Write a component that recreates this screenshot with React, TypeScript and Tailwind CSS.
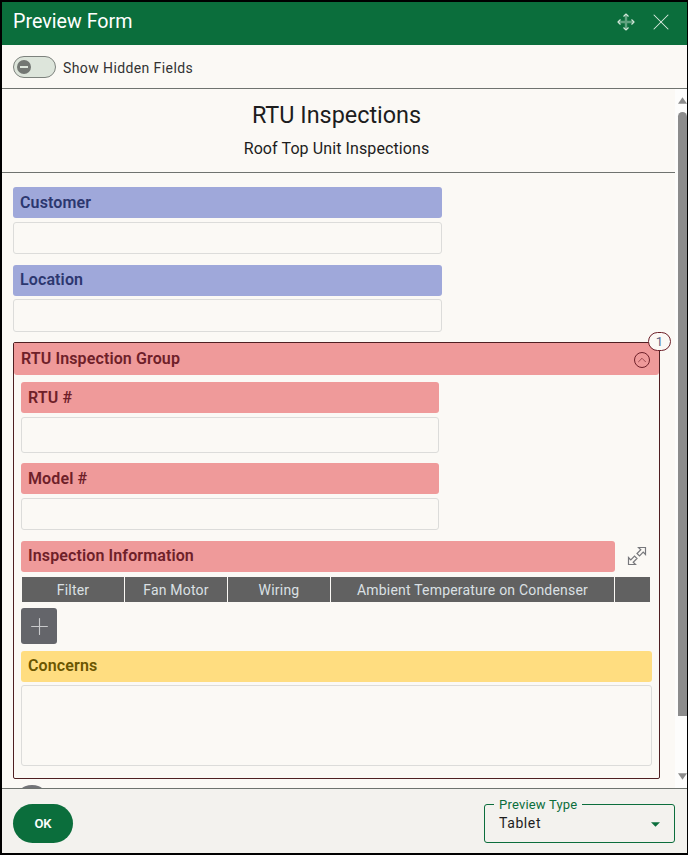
import React from "react";
import { X, Plus, ChevronUp } from "lucide-react";

const MoveIcon = () => (
    <svg width="18" height="18" viewBox="0 0 18 18" fill="none" stroke="#d3e6da" strokeWidth="1.2">
        <path d="M9 1V17M1 9H17" strokeOpacity="0.65" strokeWidth="2.4" stroke="#8fbfa3" />
        <path d="M6.5 3.5L9 1L11.5 3.5M6.5 14.5L9 17L11.5 14.5M3.5 6.5L1 9L3.5 11.5M14.5 6.5L17 9L14.5 11.5" />
    </svg>
);

const ExpandIcon = () => (
    <svg width="20" height="20" viewBox="0 0 20 20" fill="none" stroke="#77787c" strokeWidth="1.2">
        <path d="M11.5 1.5H18.5V8.5L16.2 6.2L12.5 10L10 7.5L13.8 3.8Z" />
        <path d="M8.5 18.5H1.5V11.5L3.8 13.8L7.5 10L10 12.5L6.2 16.2Z" />
    </svg>
);

const Bar = ({ label, tone, width, lift }: { label: string; tone: "blue" | "red" | "yellow"; width: string; lift?: boolean }) => {
    const tones = {
        blue: "bg-[#9fa8da] text-[#2c376f]",
        red: "bg-[#ef9a9a] text-[#6e2029]",
        yellow: "bg-[#ffdd80] text-[#6b5600]",
    };
    return (
        <div className={`flex h-[31px] items-center rounded-[3px] px-[7px] text-base font-semibold tracking-[0.12px] ${lift ? "pb-[2px]" : ""} ${tones[tone]} ${width}`}>
            {label}
        </div>
    );
};

const Input = ({ className }: { className: string }) => (
    <div className={`rounded-[3px] border border-[#dcdcda] bg-[#fbf9f5] ${className}`} />
);

export default function App() {
    return (
        <div className="flex h-[855px] w-[688px] flex-col overflow-hidden border-[2px] border-r-[1px] border-black bg-[#fbf9f5] font-['Roboto',sans-serif]">
            {/* Title bar */}
            <header className="flex h-[43px] shrink-0 items-center justify-between bg-[#0b6e3c] pb-[4px] pl-[11px] pr-[19px] text-white">
                <h1 className="text-[19.7px] leading-none">Preview Form</h1>
                <div className="flex items-center gap-[19px]">
                    <MoveIcon />
                    <X size={28} strokeWidth={0.9} color="#dcebe2" className="-mx-[7px]" />
                </div>
            </header>

            {/* Toolbar */}
            <div className="flex h-[44px] shrink-0 items-center gap-[7px] border-b border-[#6f736f] pl-[11px]">
                <div className="flex h-[22px] w-[43px] items-center rounded-full border border-[#7d827d] bg-[#dde5db] pl-[3px]">
                    <div className="flex h-[14px] w-[14px] items-center justify-center rounded-full bg-[#737773]">
                        <div className="h-[2px] w-[8px] bg-[#dde5db]" />
                    </div>
                </div>
                <span className="mt-[2px] text-sm tracking-[0.4px] text-[#333333]">Show Hidden Fields</span>
            </div>

            {/* Scrolling body */}
            <div className="flex min-h-0 flex-1">
                <main className="w-[673px] shrink-0 overflow-hidden">
                    <div className="flex h-[84px] flex-col items-center border-b border-[#6f736f] pr-[4px]">
                        <h2 className="mt-[11px] text-[23.4px] leading-[30px] text-[#1d1d1d]">RTU Inspections</h2>
                        <p className="mt-[9px] text-base leading-[20px] tracking-[0.1px] text-[#1d1d1d]">Roof Top Unit Inspections</p>
                    </div>

                    <div className="pl-[11px]">
                        <div className="mt-[14px]">
                            <Bar label="Customer" tone="blue" width="w-[429px]" />
                            <Input className="mt-[4px] h-[32px] w-[429px]" />
                        </div>
                        <div className="mt-[11px]">
                            <Bar label="Location" tone="blue" width="w-[429px]" lift />
                            <Input className="mt-[3px] h-[33px] w-[429px]" />
                        </div>

                        {/* Repeating group */}
                        <section className="relative mt-[10px] h-[437px] w-[647px] rounded-[2px] border border-[#4f1f22]">
                            <div className="flex h-[32px] items-center justify-between rounded-b-[3px] bg-[#ef9a9a] pl-[7px] pr-[9px] text-base font-semibold tracking-[0.12px] text-[#6e2029]">
                                <span>RTU Inspection Group</span>
                                <span className="mt-[1px] flex h-[16px] w-[16px] items-center justify-center rounded-full border border-[#6e2029]">
                                    <ChevronUp size={16} strokeWidth={1.1} />
                                </span>
                            </div>
                            <span className="absolute right-[-12px] top-[-11px] flex h-[19px] w-[23px] items-center justify-center rounded-full border border-[#6e2029] bg-[#fbf9f5] text-[13px] text-[#5c6488]">
                                1
                            </span>

                            <div className="px-[7px]">
                                <div className="mt-[7px]">
                                    <Bar label="RTU #" tone="red" width="w-[418px]" />
                                    <Input className="mt-[4px] h-[36px] w-[418px]" />
                                </div>
                                <div className="mt-[10px]">
                                    <Bar label="Model #" tone="red" width="w-[418px]" />
                                    <Input className="mt-[4px] h-[32px] w-[418px]" />
                                </div>
                                <div className="mt-[11px] flex h-[30px] items-center">
                                    <div className="w-[594px]">
                                        <Bar label="Inspection Information" tone="red" width="w-full" />
                                    </div>
                                    <div className="ml-[12px]">
                                        <ExpandIcon />
                                    </div>
                                </div>

                                <div className="ml-[1px] mt-[6px] flex h-[25px] w-[628px] gap-px text-sm tracking-[0.2px] text-[#dbe0e4]">
                                    <div className="flex w-[102px] items-center justify-center bg-[#616161]">Filter</div>
                                    <div className="flex w-[102px] items-center justify-center bg-[#616161]">Fan Motor</div>
                                    <div className="flex w-[102px] items-center justify-center bg-[#616161]">Wiring</div>
                                    <div className="flex w-[283px] items-center justify-center bg-[#616161]">Ambient Temperature on Condenser</div>
                                    <div className="flex-1 bg-[#616161]" />
                                </div>

                                <button className="mt-[6px] flex h-[36px] w-[36px] items-center justify-center rounded-[3px] bg-[#64656a] text-[#c9cacc]">
                                    <Plus size={27} strokeWidth={1} />
                                </button>

                                <div className="mt-[7px]">
                                    <Bar label="Concerns" tone="yellow" width="w-[631px]" lift />
                                    <Input className="mt-[3px] h-[81px] w-[631px]" />
                                </div>
                            </div>
                        </section>

                        {/* next group, cut off by the footer */}
                        <div className="ml-[1px] mt-[6px] h-[36px] w-[36px] rounded-full bg-[#737478]" />
                    </div>
                </main>

                {/* Scrollbar */}
                <div className="flex w-[12px] flex-col items-end bg-[#fdfdfc]">
                    <svg className="mt-[8px] shrink-0" width="9" height="7" viewBox="0 0 10 7">
                        <path d="M5 0L10 7H0Z" fill="#8c8c8c" />
                    </svg>
                    <div className="mt-[8px] h-[604px] w-[9px] rounded-t-[5px] bg-[#8c8c8c]" />
                    <svg className="mt-[57px] shrink-0" width="9" height="7" viewBox="0 0 10 7">
                        <path d="M0 0H10L5 7Z" fill="#8c8c8c" />
                    </svg>
                </div>
            </div>

            {/* Footer */}
            <footer className="flex h-[65px] shrink-0 items-center justify-between border-t border-[#6f736f] bg-[#f3f2ee] pl-[11px] pr-[12px]">
                <button className="mt-[5px] h-[39px] w-[60px] rounded-full bg-[#0b6e3c] text-[13px] font-semibold text-white">OK</button>
                <fieldset className="relative mb-[2px] h-[46px] w-[191px] rounded-[3px] border border-[#0b6e3c] pl-[10px]">
                    <legend className="ml-[-1px] translate-y-[1px] px-[5px] text-[13px] leading-[14px] tracking-[0.2px] text-[#0b6e3c]">Preview Type</legend>
                    <div className="mt-[2px] pl-[4px] text-sm tracking-[0.6px] text-[#1d1d1d]">Tablet</div>
                    <svg className="absolute right-[14px] top-[11px]" width="9" height="5" viewBox="0 0 10 5">
                        <path d="M0 0H10L5 5Z" fill="#0b6e3c" />
                    </svg>
                </fieldset>
            </footer>
        </div>
    );
}
